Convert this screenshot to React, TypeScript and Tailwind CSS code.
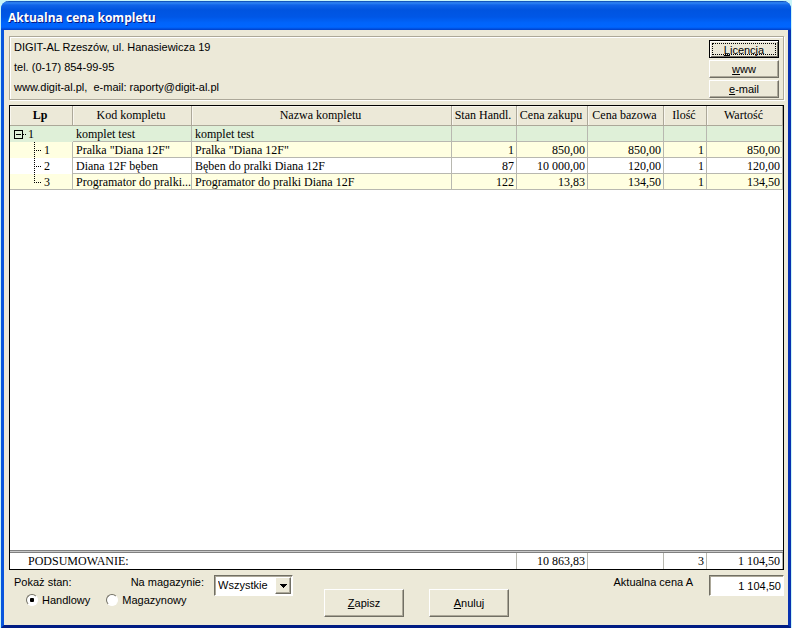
import { useState } from 'react';
import clsx from 'clsx';

type Item = {
  lp: number;
  code: string;
  name: string;
  stock: string;
  buy: string;
  base: string;
  qty: string;
  value: string;
};

const items: Item[] = [
  { lp: 1, code: 'Pralka "Diana 12F"', name: 'Pralka "Diana 12F"', stock: '1', buy: '850,00', base: '850,00', qty: '1', value: '850,00' },
  { lp: 2, code: 'Diana 12F bęben', name: 'Bęben do pralki Diana 12F', stock: '87', buy: '10 000,00', base: '120,00', qty: '1', value: '120,00' },
  { lp: 3, code: 'Programator do pralki...', name: 'Programator do pralki Diana 12F', stock: '122', buy: '13,83', base: '134,50', qty: '1', value: '134,50' },
];

const headers = ['Lp', 'Kod kompletu', 'Nazwa kompletu', 'Stan Handl.', 'Cena zakupu', 'Cena bazowa', 'Ilość', 'Wartość'];

const raised =
  'border border-t-white border-l-white border-r-[#716f64] border-b-[#716f64] shadow-[inset_-1px_-1px_0_#aca899] bg-[#ece9d8]';
const sunken =
  'border border-t-[#716f64] border-l-[#716f64] border-r-white border-b-white shadow-[inset_1px_1px_0_#aca899] bg-white';
const cell = 'h-4 border-r border-[#b8b8b0] p-0 leading-[14px] whitespace-nowrap';
const bodyCell = clsx(cell, 'border-b pt-px');

const Columns = () => (
  <colgroup>
    <col className="w-[63px]" />
    <col className="w-[119px]" />
    <col />
    <col className="w-[65px]" />
    <col className="w-[71px]" />
    <col className="w-[76px]" />
    <col className="w-[43px]" />
    <col className="w-[76px]" />
  </colgroup>
);

const ExpandIcon = () => (
  <svg width="14" height="15" viewBox="0 0 14 15" className="block" shapeRendering="crispEdges">
    <rect x="1.5" y="3.5" width="8" height="8" fill="none" stroke="#000" />
    <path d="M3 7.5h5" stroke="#000" />
    <path d="M10 7.5h4" stroke="#000" strokeDasharray="1 1" />
  </svg>
);

const Branch = ({ last }: { last: boolean }) => (
  <svg width="10" height="16" viewBox="0 0 10 16" className="block" shapeRendering="crispEdges">
    <path d={last ? 'M0.5 0v9' : 'M0.5 0v16'} stroke="#000" strokeDasharray="1 1" />
    <path d="M0 8.5h8" stroke="#000" strokeDasharray="1 1" />
  </svg>
);

const CompanyPanel = () => (
  <section className="flex justify-between border border-[#aca899] shadow-[1px_1px_0_#fff,inset_1px_1px_0_#fff] px-1 h-16">
    <address className="not-italic leading-5">
      <p>DIGIT-AL Rzeszów, ul. Hanasiewicza 19</p>
      <p>tel. (0-17) 854-99-95</p>
      <p>www.digit-al.pl,&nbsp; e-mail: raporty@digit-al.pl</p>
    </address>
    <div className="flex flex-col gap-0.5 w-[70px] pt-[3px]">
      <button className="h-[18px] border border-black shadow-[inset_1px_1px_0_#fff,inset_-1px_-1px_0_#716f64] p-[2px]">
        <span className="block h-3 border border-dotted border-black leading-[12px]">
          <u>L</u>icencja
        </span>
      </button>
      <button className={clsx(raised, 'h-[18px] leading-4')}>
        <u>w</u>ww
      </button>
      <button className={clsx(raised, 'h-[18px] leading-4')}>
        <u>e</u>-mail
      </button>
    </div>
  </section>
);

const SetTable = () => (
  <div className="flex-1 flex flex-col mt-[5px] border border-black bg-white font-['Liberation_Serif',serif] text-[12px]">
    <div className="flex-1">
      <table className="w-full table-fixed border-separate border-spacing-0">
        <Columns />
        <thead>
          <tr className="bg-[#ece9d8]">
            {headers.map((header, index) => (
              <th
                key={header}
                className={clsx(
                  'h-5 p-0 pb-0.5 pr-0.5 leading-4 border-r border-b border-[#aca899] whitespace-nowrap shadow-[inset_1px_1px_0_#f8f6ee]',
                  index === 0 ? 'font-bold' : 'font-normal'
                )}
              >
                {header}
              </th>
            ))}
          </tr>
        </thead>
        <tbody>
          <tr className="bg-[#dff0d8]">
            <td className="h-4 p-0 leading-[15px]">
              <div className="flex items-center pl-[3px] gap-px">
                <ExpandIcon />1
              </div>
            </td>
            <td className={clsx(bodyCell, 'pl-[3px]')}>komplet test</td>
            <td className={clsx(bodyCell, 'pl-[3px]')}>komplet test</td>
            {headers.slice(3).map((header) => (
              <td key={header} className={bodyCell} />
            ))}
          </tr>
          {items.map((item, index) => (
            <tr key={item.lp} className={index % 2 ? 'bg-white' : 'bg-[#ffffe1]'}>
              <td
                className={clsx(
                  'h-4 p-0 leading-4 border-r border-[#b8b8b0]',
                  index === items.length - 1 && 'shadow-[inset_0_-1px_0_#b8b8b0]'
                )}
              >
                <div className="flex items-center h-4 pl-6">
                  <Branch last={index === items.length - 1} />
                  {item.lp}
                </div>
              </td>
              <td className={clsx(bodyCell, 'pl-[3px]')}>{item.code}</td>
              <td className={clsx(bodyCell, 'pl-[3px]')}>{item.name}</td>
              {[item.stock, item.buy, item.base, item.qty, item.value].map((text, i) => (
                <td key={i} className={clsx(bodyCell, 'text-right pr-[2px]')}>
                  {text}
                </td>
              ))}
            </tr>
          ))}
        </tbody>
      </table>
    </div>

    <div className="h-[3px] border-y border-[#808080] bg-[#c8c8c8]" />
    <table className="w-full table-fixed border-separate border-spacing-0">
      <Columns />
      <tbody>
        <tr>
          <th colSpan={4} className={clsx(cell, 'text-left font-normal pl-[18px]')}>
            PODSUMOWANIE:
          </th>
          <td className={clsx(cell, 'text-right pr-[2px]')}>10 863,83</td>
          <td className={cell} />
          <td className={clsx(cell, 'text-right pr-[2px]')}>3</td>
          <td className={clsx(cell, 'text-right pr-[2px]')}>1 104,50</td>
        </tr>
      </tbody>
    </table>
  </div>
);

const Radio = ({ label, checked, onChange }: { label: string; checked: boolean; onChange: () => void }) => (
  <label className="flex items-center gap-1">
    <input
      type="radio"
      name="stan"
      checked={checked}
      onChange={onChange}
      className="appearance-none size-3 rounded-full border border-t-[#716f64] border-l-[#716f64] border-r-white border-b-white bg-white bg-center checked:bg-[radial-gradient(circle,#000_2px,#fff_2.5px)]"
    />
    {label}
  </label>
);

const BottomBar = () => {
  const [stock, setStock] = useState('Handlowy');

  return (
    <div className="flex items-start h-[55px] pl-[5px] pt-[5px]">
      <div className="w-[190px]">
        <div className="flex justify-between leading-[14px]">
          <span>Pokaż stan:</span>
          <label htmlFor="magazyn">Na magazynie:</label>
        </div>
        <div className="flex gap-4 pl-3 pt-1 leading-[14px]">
          {['Handlowy', 'Magazynowy'].map((label) => (
            <Radio key={label} label={label} checked={stock === label} onChange={() => setStock(label)} />
          ))}
        </div>
      </div>

      <div className="relative ml-2.5">
        <select id="magazyn" className={clsx(sunken, 'appearance-none block w-[79px] h-[21px] pl-[3px]')}>
          <option>Wszystkie</option>
        </select>
        <span
          className={clsx(raised, 'pointer-events-none absolute right-0.5 top-0.5 w-4 h-[17px] flex items-center justify-center')}
        >
          <svg width="7" height="4" viewBox="0 0 7 4" shapeRendering="crispEdges">
            <path d="M0 0h7L3.5 4z" />
          </svg>
        </span>
      </div>

      <div className="flex gap-[25px] ml-[31px] pt-3.5">
        <button className={clsx(raised, 'w-20 h-7')}>
          <u>Z</u>apisz
        </button>
        <button className={clsx(raised, 'w-20 h-7')}>
          <u>A</u>nuluj
        </button>
      </div>

      <label htmlFor="cena" className="ml-auto leading-[14px]">
        Aktualna cena A
      </label>
      <input id="cena" readOnly value="1 104,50" className={clsx(sunken, 'ml-4 w-[75px] h-[21px] pr-0.5 text-right')} />
    </div>
  );
};

export default function App() {
  return (
    <div className="h-screen flex flex-col bg-[#c8f4f8] pt-px px-px font-['Liberation_Sans',sans-serif] text-[11px] text-black">
      <div className="flex-1 flex flex-col rounded-t-lg border-x-[3px] border-b-[3px] border-l-[#0855dd] border-r-[#0831b0] border-b-[#001c83] bg-[#ece9d8]">
        <header className="-mx-[3px] h-[29px] rounded-t-lg px-[7px] flex items-center bg-[linear-gradient(180deg,#0540a8_0%,#2f86f5_6%,#0f63e8_14%,#0054e0_30%,#0057e6_55%,#0064fb_75%,#0066ff_90%,#003fc8_100%)]">
          <h1 className="font-['Open_Sans',sans-serif] font-bold text-[12px] pt-1 text-white [text-shadow:1px_1px_0_#0a1883]">
            Aktualna cena kompletu
          </h1>
        </header>
        <main className="flex-1 flex flex-col pl-[5px] pr-1 pt-1.5">
          <CompanyPanel />
          <SetTable />
          <BottomBar />
        </main>
      </div>
    </div>
  );
}
